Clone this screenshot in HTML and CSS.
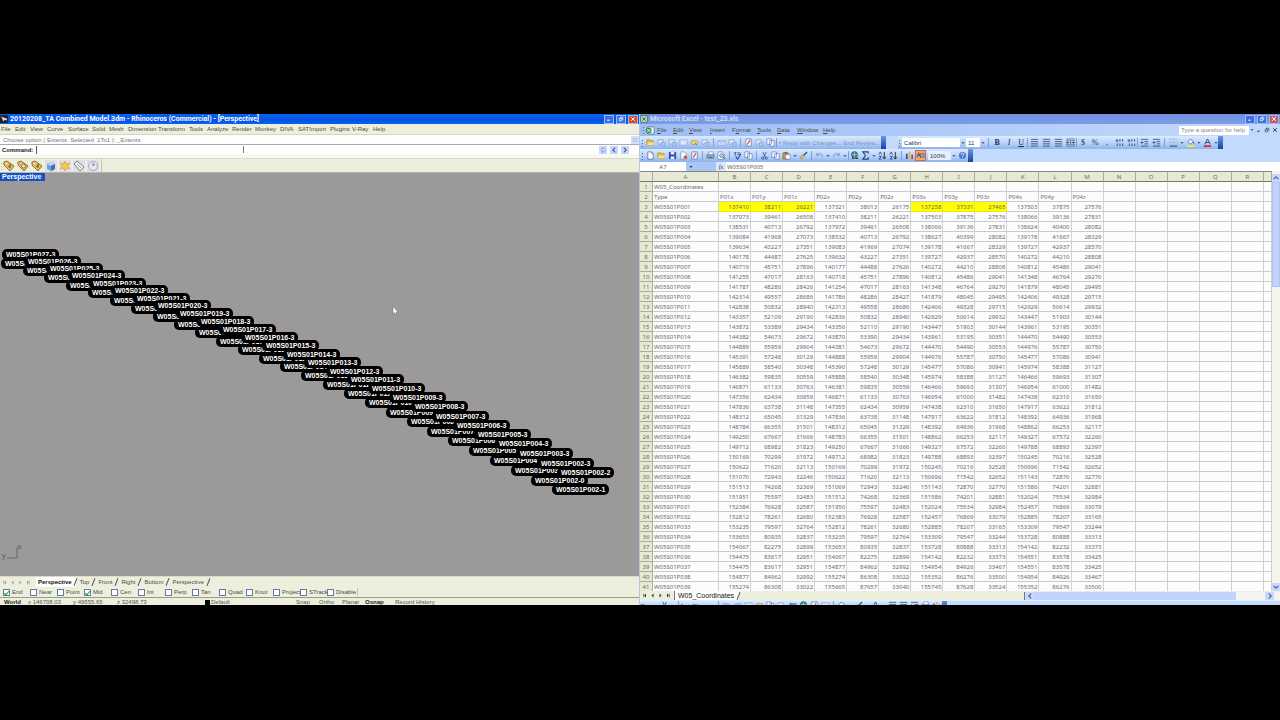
FILE: index.html
```html
<!DOCTYPE html>
<html lang="en">
<head>
<meta charset="utf-8">
<title>Rhinoceros and Excel</title>
<link rel="stylesheet" href="styles.css">
</head>
<body>
<svg class="defs" aria-hidden="true">
  <symbol id="i-open" viewBox="0 0 10 10"><path d="M1 2h3l1 1h3v5H1z" fill="#e8bf3a" stroke="#9a7a20" stroke-width=".6"/><path d="M2 5h7L8 8H1z" fill="#fbe27a"/></symbol>
  <symbol id="i-new" viewBox="0 0 10 10"><path d="M2 1h4l2 2v6H2z" fill="#fff" stroke="#52658f" stroke-width=".8"/><path d="M6 1v2h2" fill="none" stroke="#52658f" stroke-width=".6"/></symbol>
  <symbol id="i-save" viewBox="0 0 10 10"><path d="M1 1h8v8H1z" fill="#344fa6"/><path d="M3 1h4v3H3zM3 6h4v3H3z" fill="#e8eefc"/></symbol>
  <symbol id="i-perm" viewBox="0 0 10 10"><path d="M2 1h4l2 2v6H2z" fill="#fff" stroke="#71809f" stroke-width=".7"/><circle cx="7" cy="7" r="2" fill="#d05a35"/></symbol>
  <symbol id="i-print" viewBox="0 0 10 10"><path d="M3 1h5v4H3z" fill="#fff" stroke="#60708f" stroke-width=".6"/><path d="M1 4h8v4H1z" fill="#93a9c3" stroke="#48617e" stroke-width=".6"/><path d="M3 7h4" stroke="#2c7a38"/></symbol>
  <symbol id="i-preview" viewBox="0 0 10 10"><path d="M1 1h5l2 2v6H1z" fill="#fff" stroke="#61749d" stroke-width=".7"/><circle cx="5" cy="5" r="2" fill="#bfe0f5" stroke="#345" stroke-width=".7"/><path d="M6.500 6.500L9 9" stroke="#345"/></symbol>
  <symbol id="i-spell" viewBox="0 0 10 10"><path d="M1 2h3M2.500 2v3M5 2h3M5 4h3" stroke="#2b4ea0"/><path d="M3 6l2 3 4-6" fill="none" stroke="#2551b0" stroke-width="1.300"/></symbol>
  <symbol id="i-cut" viewBox="0 0 10 10"><path d="M3 1l3 6M7 1L4 7" stroke="#3a57a5"/><circle cx="3" cy="8" r="1.300" fill="none" stroke="#3a57a5"/><circle cx="7" cy="8" r="1.300" fill="none" stroke="#3a57a5"/></symbol>
  <symbol id="i-copy" viewBox="0 0 10 10"><path d="M1 1h5v6H1zM4 3h5v6H4z" fill="#fff" stroke="#5370b5" stroke-width=".7"/></symbol>
  <symbol id="i-paste" viewBox="0 0 10 10"><path d="M1 2h6v7H1z" fill="#d99837" stroke="#815613" stroke-width=".6"/><path d="M3 1h2v2H3z" fill="#555"/><path d="M4 4h5v5H4z" fill="#fff" stroke="#5370b5" stroke-width=".6"/></symbol>
  <symbol id="i-brush" viewBox="0 0 10 10"><path d="M9 1L5 5" stroke="#35518d" stroke-width="1.500"/><path d="M4 4l2 2-3 3-2-1z" fill="#edbd3f" stroke="#8a691a" stroke-width=".5"/></symbol>
  <symbol id="i-undo" viewBox="0 0 10 10"><path d="M2 2v3h3M2 5c2-3 7-3 6 2" fill="none" stroke="#8ba5d5" stroke-width="1.200"/></symbol>
  <symbol id="i-redo" viewBox="0 0 10 10"><path d="M8 2v3H5M8 5C6 2 1 2 2 7" fill="none" stroke="#8ba5d5" stroke-width="1.200"/></symbol>
  <symbol id="i-link" viewBox="0 0 10 10"><circle cx="5" cy="4" r="3.300" fill="#388e5c" stroke="#28598a"/><path d="M2 4h6M5 1v6" stroke="#b8e0d5" stroke-width=".7"/><path d="M2 8h3M6 8h3" stroke="#345" stroke-width="1.500"/></symbol>
  <symbol id="i-sum" viewBox="0 0 10 10"><path d="M8 3V1H2l3 4-3 4h6V7" fill="none" stroke="#263f7d" stroke-width="1.200"/></symbol>
  <symbol id="i-sort" viewBox="0 0 10 10"><path d="M1 4l1.500-3L4 4M1 6h3L1 9h3" fill="none" stroke="#304fa0"/><path d="M7 1v7M5.500 6.500L7 9l1.500-2.500" fill="none" stroke="#222"/></symbol>
  <symbol id="i-chart" viewBox="0 0 10 10"><path d="M1 3h2v6H1z" fill="#315ab5"/><path d="M4 1h2v8H4z" fill="#e6b933"/><path d="M7 4h2v5H7z" fill="#c34336"/></symbol>
  <symbol id="i-draw" viewBox="0 0 10 10"><path d="M1 7l2-5 2 5M2 5h2" fill="none" stroke="#304fa0"/><path d="M5 3h4v4H5z" fill="#8dacda" stroke="#345" stroke-width=".6"/></symbol>
  <symbol id="i-help" viewBox="0 0 10 10"><circle cx="5" cy="5" r="4" fill="#4777d2"/><path d="M3.500 4c0-2 3-2 3 0 0 1-1.500 1-1.500 2M5 7v1" fill="none" stroke="#fff"/></symbol>
  <symbol id="i-note" viewBox="0 0 10 10"><path d="M1 2h6v4H4L2 8V6H1z" fill="#dce7fa" stroke="#89a2cf" stroke-width=".8"/><path d="M5 5h4v4H5z" fill="#b4c7ea" stroke="#7c95c7" stroke-width=".6"/></symbol>
  <symbol id="i-box" viewBox="0 0 10 10"><path d="M1 2h8v6H1z" fill="#d9e5fa" stroke="#91a9d4" stroke-width=".8"/></symbol>
  <symbol id="i-ink" viewBox="0 0 10 10"><ellipse cx="5" cy="5" rx="4" ry="2.500" fill="#ecd482" stroke="#9d8a4a" stroke-width=".7"/><path d="M5 5l3 3" stroke="#777"/></symbol>
  <symbol id="i-mail" viewBox="0 0 10 10"><path d="M1 3h8v5H1zM1 3l4 3 4-3" fill="#dce7fa" stroke="#8ba5d5" stroke-width=".7"/></symbol>
  <symbol id="i-edit" viewBox="0 0 10 10"><path d="M2 1h6v8H2z" fill="#fff" stroke="#5370b5" stroke-width=".8"/><path d="M3 7l3-5 1 1-3 5z" fill="#d65a45"/></symbol>
  <symbol id="i-lines" viewBox="0 0 10 10"><path d="M1 1.500h8M1 4h8M1 6.500h8M1 9h8" stroke="#34496f" stroke-width=".9"/></symbol>
  <symbol id="i-merge" viewBox="0 0 10 10"><path d="M1 1h8v8H1zM1 3h8M1 7h8" fill="none" stroke="#53698f" stroke-width=".8"/><path d="M1 5h2M7 5h2M5 4v2" stroke="#222"/></symbol>
  <symbol id="i-dec" viewBox="0 0 10 10"><path d="M1 3h3M3 1L1 3l2 2" fill="none" stroke="#365cab"/><path d="M5 1h1v3H5zM8 1h1v3H8zM2 6h1v3H2zM5 6h1v3H5zM8 6h1v3H8z" fill="#34496f"/></symbol>
  <symbol id="i-indent" viewBox="0 0 10 10"><path d="M1 1.500h8M5 4h4M5 6.500h4M1 9h8M4 5H1M2.500 3.500L1 5l1.500 1.500" fill="none" stroke="#34496f" stroke-width=".9"/></symbol>
  <symbol id="i-border" viewBox="0 0 10 10"><path d="M1 1h8v8M1 1v8M5 1v8M1 5h8" fill="none" stroke="#8098c5" stroke-width=".7" stroke-dasharray="1 1"/><path d="M1 9h8" stroke="#333"/></symbol>
  <symbol id="i-fill" viewBox="0 0 10 10"><path d="M2 4l3-3 3 3-3 3z" fill="#eef3fd" stroke="#445a86" stroke-width=".8"/><path d="M8 4l1 3" stroke="#346bc4"/><path d="M1 8h8v2H1z" fill="#f6ec33"/></symbol>
  <symbol id="i-color" viewBox="0 0 10 10"><path d="M2 7l3-6 3 6M3 5h4" fill="none" stroke="#344f88" stroke-width="1.100"/><path d="M1 8h8v2H1z" fill="#e32929"/></symbol>
  <symbol id="i-min" viewBox="0 0 10 10"><path d="M2 7h4" stroke="currentColor" stroke-width="1.800"/></symbol>
  <symbol id="i-restore" viewBox="0 0 10 10"><path d="M4 4V2h4v4H7M2 4h4v4H2z" fill="none" stroke="currentColor" stroke-width="1.200"/></symbol>
  <symbol id="i-close" viewBox="0 0 10 10"><path d="M2 2l6 6M8 2L2 8" stroke="currentColor" stroke-width="1.600"/></symbol>
  <symbol id="i-down" viewBox="0 0 10 10"><path d="M1 3h8L5 7z" fill="currentColor"/></symbol>
  <symbol id="i-left" viewBox="0 0 10 10"><path d="M7 1L3 5l4 4" fill="none" stroke="currentColor" stroke-width="2"/></symbol>
  <symbol id="i-right" viewBox="0 0 10 10"><path d="M3 1l4 4-4 4" fill="none" stroke="currentColor" stroke-width="2"/></symbol>
  <symbol id="i-up" viewBox="0 0 10 10"><path d="M1 7l4-4 4 4" fill="none" stroke="currentColor" stroke-width="2"/></symbol>
  <symbol id="i-dn" viewBox="0 0 10 10"><path d="M1 3l4 4 4-4" fill="none" stroke="currentColor" stroke-width="2"/></symbol>
  <symbol id="i-prev" viewBox="0 0 10 10"><path d="M7 1v8L3 5z" fill="currentColor"/></symbol>
  <symbol id="i-next" viewBox="0 0 10 10"><path d="M3 1v8l4-4z" fill="currentColor"/></symbol>
  <symbol id="i-first" viewBox="0 0 10 10"><path d="M8 1v8L4 5zM2 1h1v8H2z" fill="currentColor"/></symbol>
  <symbol id="i-last" viewBox="0 0 10 10"><path d="M2 1v8l4-4zM7 1h1v8H7z" fill="currentColor"/></symbol>
  <symbol id="i-tag" viewBox="0 0 12 12"><path d="M1 5V2l3-1 7 5-4 5z" fill="#e2bd66" stroke="#86642a" stroke-width=".9"/><circle cx="3.500" cy="3.500" r=".8" fill="#fff"/><path d="M5 7l3-2M7 4v4" stroke="#6d501f" stroke-width=".9"/></symbol>
  <symbol id="i-tag2" viewBox="0 0 12 12"><path d="M1 5V2l3-1 7 5-4 5z" fill="#e2bd66" stroke="#86642a" stroke-width=".9"/><circle cx="6.500" cy="6" r="2" fill="#f5e3b2" stroke="#86642a" stroke-width=".8"/></symbol>
  <symbol id="i-cube" viewBox="0 0 12 12"><path d="M2 4l4-2 4 2v5l-4 2-4-2z" fill="#6f9fe0"/><path d="M2 4l4-2 4 2-4 2z" fill="#b9d7f7"/><path d="M6 6l4-2v5l-4 2z" fill="#406fba"/></symbol>
  <symbol id="i-star" viewBox="0 0 12 12"><path d="M6 1l1.500 3L11 3 9 6l2 3-3.500-1L6 11 4.500 8 1 9l2-3-2-3 3.500 1z" fill="#f4c64f" stroke="#d99e32" stroke-width=".6"/></symbol>
  <symbol id="i-tag3" viewBox="0 0 12 12"><path d="M1 4l3-3 7 6-4 4z" fill="#eeeeec" stroke="#77776e" stroke-width=".9"/><path d="M4 4l4 4" stroke="#aaa"/></symbol>
  <symbol id="i-clock" viewBox="0 0 12 12"><circle cx="6" cy="6" r="4.500" fill="#e6e5f1" stroke="#aaa4bc"/><path d="M6 3v3l2-2" fill="none" stroke="#817c99"/></symbol>
</svg>
<main class="desktop">
  <section class="rhino" aria-label="Rhinoceros">
    <header class="title">
      <svg class="app" viewBox="0 0 10 10"><path d="M0 0h10v10H0z" fill="#222"/><path d="M1 2l3 1 4 1 1 3-3-1-2 2-1-3z" fill="#ddd"/></svg>
      <h1>20120208_TA Combined Model.3dm - Rhinoceros (Commercial) - [Perspective]</h1>
      <div class="winbtns"><button aria-label="Minimize"><svg><use href="#i-min"/></svg></button><button aria-label="Restore"><svg><use href="#i-restore"/></svg></button><button class="x" aria-label="Close"><svg><use href="#i-close"/></svg></button></div>
    </header>
    <nav class="menu rmenu" id="rmenu"></nav>
    <div class="history"><span>Choose option ( Extents&nbsp; Selected&nbsp; 1To1 ): _Extents</span><button aria-label="History"><svg viewBox="0 0 10 10"><path d="M1 3h8M1 7h8" stroke="#7f9ad8"/></svg></button></div>
    <div class="command"><label for="cmd">Command:</label><input id="cmd" type="text"><i class="split"></i><span class="grow"></span><button aria-label="Scroll"><svg viewBox="0 0 10 10"><path d="M2 4l3-3 3 3M2 6l3 3 3-3" fill="none" stroke="#3d5fae"/></svg></button><button aria-label="Left"><svg><use href="#i-left"/></svg></button><button aria-label="Right"><svg><use href="#i-right"/></svg></button></div>
    <div class="rtools"><i class="grip pale-grip"></i><span class="rbuttons" id="rtools"></span></div>
    <div class="viewport">
      <div class="vname">Perspective</div>
      <div id="tags"></div>
      <svg class="axes" viewBox="0 0 24 18"><path d="M7 14h10V3" fill="none" stroke="#666"/><path d="M18 1l3 4M21 1l-3 4M2 10l2 3 2-3M4 13l-1 3" fill="none" stroke="#555" stroke-width=".8"/></svg>
      <svg class="cursor" viewBox="0 0 6 10"><path d="M1 0v8l1.500-1.500L4 9l1-.5-1-2h2z" fill="#fff" stroke="#555" stroke-width=".4"/></svg>
    </div>
    <nav class="vtabs"><span class="nav"><button aria-label="First"><svg><use href="#i-first"/></svg></button><button aria-label="Previous"><svg><use href="#i-prev"/></svg></button><button aria-label="Next"><svg><use href="#i-next"/></svg></button><button aria-label="Last"><svg><use href="#i-last"/></svg></button></span><button class="on">Perspective</button><button>Top</button><button>Front</button><button>Right</button><button>Bottom</button><button>Perspective</button></nav>
    <div class="osnap" id="osnap"></div>
    <footer class="status"><b>World</b><span>x 146708.03</span><span>y 49555.65</span><span>z 32498.73</span><i></i><span>Default</span><span>Snap</span><span>Ortho</span><span>Planar</span><b>Osnap</b><span>Record History</span></footer>
  </section>

  <section class="excel" aria-label="Microsoft Excel">
    <header class="title pale">
      <svg class="app" viewBox="0 0 10 10"><path d="M1 1h8v8H1z" fill="#e8f4e8" stroke="#286b36"/><path d="M3 3l4 4M7 3L3 7" stroke="#238238" stroke-width="1.600"/></svg>
      <h2>Microsoft Excel - test_23.xls</h2>
      <div class="winbtns"><button aria-label="Minimize"><svg><use href="#i-min"/></svg></button><button aria-label="Restore"><svg><use href="#i-restore"/></svg></button><button class="x" aria-label="Close"><svg><use href="#i-close"/></svg></button></div>
    </header>
    <div class="xmenu">
      <i class="grip"></i><svg class="book" viewBox="0 0 10 10"><path d="M2 1h7v8H2z" fill="#fff" stroke="#5d75a8"/><path d="M0 2h6v6H0z" fill="#34904a"/><path d="M1 3l4 4M5 3L1 7" stroke="#fff"/></svg>
      <nav class="menu emenu" id="emenu"></nav>
      <input type="text" placeholder="Type a question for help" aria-label="Type a question for help">
      <button class="drop" aria-label="Questions"><svg><use href="#i-down"/></svg></button>
      <div class="docbtns"><button aria-label="Minimize workbook"><svg><use href="#i-min"/></svg></button><button aria-label="Restore workbook"><svg><use href="#i-restore"/></svg></button><button aria-label="Close workbook"><svg><use href="#i-close"/></svg></button></div>
    </div>
    <div class="bars">
      <div class="barrow">
        <div class="bar"><i class="grip"></i><span class="icons" data-icons="open note note box ink note | mail note | edit note copy /"></span><button class="txt"><svg><use href="#i-down"/></svg>Reply with Changes...</button><button class="txt">End Review...</button><i class="cap"></i></div>
        <div class="bar format"><i class="grip"></i><select class="font" aria-label="Font"><option>Calibri</option></select><svg class="sarrow"><use href="#i-down"/></svg><select class="size" aria-label="Font size"><option>11</option></select><svg class="sarrow"><use href="#i-down"/></svg><i class="sep"></i><button class="glyph"><b>B</b></button><button class="glyph"><em>I</em></button><button class="glyph"><u>U</u></button><span class="icons wide" data-icons="/ lines lines lines merge /"></span><button class="glyph">$</button><button class="glyph">%</button><button class="glyph">,</button><span class="icons wide" data-icons="dec dec / indent indent | border v fill v color v"></span><i class="cap"></i></div>
      </div>
      <div class="barrow">
        <div class="bar"><i class="grip"></i><span class="icons" data-icons="new open save perm edit | print preview | spell copy | cut copy paste v brush | undo v redo v / link sum v sort sort | chart draw*"></span><input class="zoom" type="text" value="100%" aria-label="Zoom"><svg class="sarrow"><use href="#i-down"/></svg><span class="icons" data-icons="help"></span><i class="cap"></i></div>
      </div>
    </div>
    <div class="formula"><input class="cellname" type="text" value="A7" aria-label="Name box"><span class="fxgap"><svg><use href="#i-down"/></svg></span><button class="fx"><em>fx</em></button><input class="cellvalue" type="text" value="W05S01P005" aria-label="Formula"></div>
    <div class="sheet">
      <div class="gridwrap"><table><colgroup id="cols"></colgroup><thead id="head"></thead><tbody id="body"></tbody></table></div>
      <div class="vscroll"><button aria-label="Scroll up"><svg><use href="#i-up"/></svg></button><i></i><span></span><button aria-label="Scroll down"><svg><use href="#i-dn"/></svg></button></div>
    </div>
    <div class="sheettabs"><span class="nav"><button aria-label="First sheet"><svg><use href="#i-first"/></svg></button><button aria-label="Previous sheet"><svg><use href="#i-prev"/></svg></button><button aria-label="Next sheet"><svg><use href="#i-next"/></svg></button><button aria-label="Last sheet"><svg><use href="#i-last"/></svg></button></span><button class="on">W05_Coordinates</button><span class="grow"></span><div class="hscroll"><button aria-label="Scroll left"><svg><use href="#i-left"/></svg></button><i></i><span></span><button aria-label="Scroll right"><svg><use href="#i-right"/></svg></button></div></div>
    <div class="drawbar"><div class="bar"><button class="txt">Draw ▾</button><span class="icons" data-icons="cut v |"></span><button class="txt">AutoShapes ▾</button><span class="icons" data-icons="| undo redo box ink copy note draw link edit box | fill v brush v color v lines lines indent print chart"></span><i class="cap"></i></div></div>
  </section>
</main>
<script src="app.js"></script>
</body>
</html>
```

FILE: styles.css
```css
* { box-sizing: border-box; }
body { margin: 0; min-height: 100vh; padding: 114px 0; background: #000; font: 6px/8px "Liberation Sans", Arial, sans-serif; color: #4b4b46; }
button, input, select { font: inherit; color: inherit; margin: 0; padding: 0; border: 0; border-radius: 0; background: none; min-width: 0; }
button { display: flex; align-items: center; justify-content: center; white-space: nowrap; }
select { appearance: none; }
svg { display: block; flex: none; width: 6px; height: 6px; }
i { display: block; flex: none; }
.defs { position: absolute; width: 0; height: 0; }
.grow { flex: 1; }
.desktop { display: grid; grid-template-columns: 1fr 1fr; height: 491px; overflow: hidden; }
.rhino, .excel { display: flex; flex-direction: column; min-width: 0; overflow: hidden; background: #ecefdc; white-space: nowrap; }
.rhino { border-right: 1px solid #b7c6e0; }

.title { display: flex; align-items: center; flex: none; height: 10px; padding-right: 1px; background: linear-gradient(#0a62f2, #0054e3 60%, #0960f5); color: #fff; }
.title h1, .title h2 { flex: 1; margin: 0; font: bold 7px/10px Roboto, sans-serif; }
.title .app { width: 8px; height: 8px; margin-right: 2px; }
.pale { background: linear-gradient(#6f8fe0, #7d9ce8); }
.title.pale h2 { color: #d9e3fa; font-weight: 500; }
.winbtns { display: flex; gap: 2px; }
.winbtns button { width: 10px; height: 9px; background: #3b6fe6; border: 1px solid #9db8f3; color: #fff; }
.winbtns .x { background: #dc4c2c; }
.pale .winbtns .x { background: #cf5b68; }

.menu { display: grid; align-items: center; }
.menu a { color: inherit; text-decoration: none; }
.rmenu { flex: none; height: 11px; padding-left: 1px; border-bottom: 1px solid #d4d6c7; grid-template-columns: 14px 15px 17px 21px 24px 17px 19px 30px 31px 18px 25px 23px 25px 18px 32px 22px 21px 20px; }
.history { display: flex; align-items: center; justify-content: space-between; flex: none; height: 10px; padding-left: 3px; background: #fdfdfd; border-bottom: 1px solid #aaa; color: #77777a; }
.history button { width: 8px; height: 8px; background: #d5e0f8; }
.command { display: flex; align-items: center; flex: none; height: 9px; padding: 0 10px 0 2px; background: #fff; color: #222; gap: 3px; }
.command label { font-weight: bold; }
.command input { width: 204px; height: 8px; border-left: 1px solid #555; }
.command .split { width: 1px; height: 7px; background: #777; }
.command button { width: 8px; height: 8px; background: #c9d8fa; color: #3d5fae; }
.rtools { flex: none; display: flex; align-items: center; height: 19px; padding-top: 5px; border-bottom: 1px solid #b5b5ac; background: linear-gradient(#f7f8ef 4px, #bfc1b4 4px, #ecefdc 5px); }
.rbuttons { display: flex; align-items: center; height: 13px; padding-right: 2px; gap: 2px; border-right: 1px solid #c4c6b8; }
.rtools button { width: 12px; height: 12px; }
.rtools button svg { width: 12px; height: 12px; }
.rbuttons button:nth-child(n+4) { background: #dedfe7; }
.rtools .pale-grip { width: 3px; background: radial-gradient(circle, #b9bbad 1px, transparent 1px) 0 0 / 3px 3px repeat-y; }

.viewport { position: relative; flex: 1; overflow: hidden; background: #9b9999; }
.vname { width: 45px; height: 8px; padding-left: 2px; background: #174fc4; color: #fff; font-weight: bold; font-size: 7px; }
.tag { position: absolute; height: 11px; padding: 0 4px; border-radius: 5px; background: #000; color: #fff; font-size: 7px; font-weight: bold; line-height: 11px; }
.axes { position: absolute; left: 0; bottom: 14px; width: 24px; height: 18px; }
.cursor { position: absolute; left: 392px; top: 133px; width: 6px; height: 10px; }

.vtabs { display: flex; flex: none; height: 11px; border-top: 1px solid #d9dbcd; align-items: center; }
.nav { display: flex; color: #999; }
.nav button { width: 8px; height: 8px; }
.nav svg { width: 5px; height: 5px; }
.vtabs .nav { width: 36px; }
.vtabs > button { height: 10px; padding: 0 4px 0 2px; position: relative; }
.vtabs > button + button { padding: 0 5px 0 4px; }
.vtabs > button::after, .sheettabs > button::after { content: ""; position: absolute; right: 0; top: 1px; width: 1px; height: 8px; background: #555; transform: rotate(22deg); }
.on { color: #111; background: #fff; font-weight: bold; }
.osnap { display: grid; grid-template-columns: repeat(13, 27px); flex: none; height: 11px; padding-left: 3px; border-bottom: 1px solid #999b8f; align-items: center; }
.osnap label { display: flex; align-items: center; gap: 2px; }
.osnap label:last-child { width: 31px; border-right: 1px solid #c4c6b8; }
.osnap input { appearance: none; display: grid; place-items: start center; flex: none; width: 7px; height: 7px; background: #fff; border: 1px solid #5e7da4; }
.osnap input:checked::before { content: ""; width: 2px; height: 4px; border: solid #249a35; border-width: 0 1px 1px 0; transform: rotate(40deg); }
.status { display: grid; grid-template-columns: 24px 45px 44px 88px 6px 85px 23px 23px 23px 30px 60px; flex: none; height: 7px; padding-left: 4px; line-height: 9px; overflow: hidden; color: #555; }
.status b { color: #222; }
.status i { width: 5px; height: 5px; margin-top: 2px; background: #000; }

.xmenu { display: flex; align-items: center; flex: none; height: 12px; padding: 0 1px 0 2px; background: linear-gradient(90deg, #9ebdf5, #c2dafc); }
.xmenu .book { width: 9px; height: 9px; margin-right: 2px; }
.emenu { flex: 1; grid-template-columns: 16px 16px 21px 22px 25px 20px 20px 26px 30px; }
.xmenu > input { width: 70px; height: 9px; padding-left: 2px; background: #fff; }
.xmenu > input::placeholder { color: #888; opacity: 1; }
.drop { width: 6px; height: 8px; }
.drop svg, .sarrow { width: 4px; height: 4px; margin: 0 1px; }
.docbtns { display: flex; }
.docbtns button { width: 8px; height: 8px; color: #345; }
.grip { width: 4px; height: 8px; background: radial-gradient(circle, #4668ad 1px, transparent 1px) 0 0 / 3px 3px repeat-y; }
.bars { flex: none; background: #c2dafc; }
.barrow { display: flex; gap: 12px; height: 13px; }
.bar { display: flex; align-items: center; height: 13px; padding-left: 1px; background: linear-gradient(#dceafe, #b4cff8 60%, #8db1ec); color: #24375f; }
.format { padding-left: 0; }
.icons { display: flex; align-items: center; }
.icons button { width: 11px; height: 11px; }
.icons svg { width: 9px; height: 9px; }
.wide button { width: 12px; }
.icons .arr { width: 6px; }
.icons .arr svg { width: 4px; height: 4px; }
.wide .arr { width: 5px; }
.icons .hot { background: #f5a766; outline: 1px solid #bf6f55; outline-offset: -1px; }
.sep { width: 1px; height: 9px; margin: 0 2px; background: #7d9dd5; }
.sep.thin { margin: 0; }
.txt { padding: 0 1px; color: #8094bd; }
.txt svg { width: 4px; height: 4px; margin-right: 1px; }
.cap { width: 5px; height: 13px; background: linear-gradient(#6e98e5, #14409f); }
.font { width: 58px; height: 9px; padding-left: 2px; background: #fff; }
.size { width: 14px; height: 9px; padding-left: 2px; background: #fff; }
.glyph { width: 12px; font: 8px/10px "Liberation Serif", serif; color: #20304f; }
.zoom { width: 23px; height: 9px; margin-left: 2px; padding-left: 2px; background: #e6effd; }

.formula { display: flex; flex: none; height: 9px; background: #fff; color: #666; }
.formula input { font-family: "Noto Sans", sans-serif; }
.cellname { width: 46px; text-align: center; }
.fxgap { display: flex; align-items: center; width: 30px; padding-left: 3px; background: #a9c6f5; color: #111; }
.fxgap svg { width: 4px; height: 4px; }
.fx { width: 10px; background: #dbe7fb; color: #234; font-family: "Liberation Serif", serif; }
.cellvalue { flex: 1; padding-left: 1px; }
.sheet { display: flex; flex: 1; min-height: 0; }
.gridwrap { flex: 1; overflow: hidden; background: #fdfcfd; }
table { width: 100%; table-layout: fixed; border-collapse: separate; border-spacing: 0; font: 6px/8px "Noto Sans", sans-serif; color: #6c6a70; }
th, td { height: 10px; padding: 0 1px; border-right: 1px solid #d4d1d4; border-bottom: 1px solid #ccc9cc; font-weight: normal; text-align: right; line-height: 8px; overflow: hidden; }
th { text-align: center; background: #e6ead5; border-color: #aab098; color: #6b6d5e; }
thead th { height: 11px; border-top: 1px solid #85897a; border-bottom-color: #737f5b; }
.c-row { width: 13px; }
.c-name { width: 66px; }
.c-rest { width: 8px; }
td.text { text-align: left; }
td.mark { background: #ff0; border-color: #eaea1c; }
.vscroll { display: flex; flex-direction: column; width: 8px; padding-top: 3px; background: #f5f5ef; }
.vscroll button { height: 8px; background: #c8d7fb; color: #4864a5; }
.vscroll i { height: 105px; background: #c2d2fb; border: 1px solid #afc3f3; }
.vscroll span { flex: 1; }
.sheettabs { display: flex; flex: none; height: 9px; align-items: center; }
.sheettabs .nav { color: #333; width: 34px; }
.sheettabs > button { position: relative; height: 9px; padding: 0 5px 0 3px; border-left: 1px solid #777; font-weight: normal; font-size: 7px; }
.hscroll { display: flex; width: 40%; height: 8px; padding-right: 6px; background: #f5f5ef; border-left: 1px solid #777; }
.hscroll button { width: 9px; background: #c8d7fb; color: #4864a5; }
.hscroll i { flex: 7; background: #c2d2fb; }
.hscroll span { flex: 1; }
.drawbar { flex: none; height: 5px; overflow: hidden; background: #c2dafc; border-top: 1px solid #e6effc; }
.drawbar .bar { width: 48%; height: 9px; }
.drawbar .cap { margin-left: auto; }
.drawbar .txt { color: #24375f; }
```

FILE: app.js
```js
const $ = id => document.getElementById(id);
const svg = n => `<svg><use href="#i-${n}"/></svg>`;
const links = s => s.split(" ").map(t => `<a href="#">${t}</a>`).join("");

$("rmenu").innerHTML = links("File Edit View Curve Surface Solid Mesh Dimension Transform Tools Analyze Render Monkey DIVA SATImport Plugins V-Ray Help");
$("emenu").innerHTML = "File Edit View Insert Format Tools Data Window Help".split(" ")
  .map(t => `<a href="#">${t === "Format" ? "F<u>o</u>rmat" : `<u>${t[0]}</u>${t.slice(1)}`}</a>`).join("");
$("rtools").innerHTML = "tag tag2 tag cube star tag3 clock".split(" ").map(n => `<button aria-label="${n}">${svg(n)}</button>`).join("");
$("osnap").innerHTML = "End Near Point Mid Cen Int Perp Tan Quad Knot Project STrack Disable".split(" ")
  .map(t => `<label><input type="checkbox"${t === "End" || t === "Mid" ? " checked" : ""}>${t}</label>`).join("");

// Toolbar strips: "|" wide separator, "/" thin separator, "v" drop-down arrow, "*" pressed.
document.querySelectorAll("[data-icons]").forEach(el => {
  el.innerHTML = el.dataset.icons.split(" ").map(n => {
    if (n === "|") return '<i class="sep"></i>';
    if (n === "/") return '<i class="sep thin"></i>';
    if (n === "v") return `<button class="arr" aria-label="More">${svg("down")}</button>`;
    const name = n.replace("*", "");
    return `<button aria-label="${name}"${n !== name ? ' class="hot"' : ""}>${svg(name)}</button>`;
  }).join("");
});

// Point labels: [x, y] of each label's left edge and middle, from point 27 down to 2.
const back = [[1,263],[23,270],[44,277],[66,285],[88,292],[110,300],[131,308],[153,316],[174,324],[195,332],[216,341],[238,349],[259,358],[280,366],[301,375],[323,384],[344,393],[365,402],[386,412],[407,421],[427,431],[448,440],[469,450],[490,460],[511,470],[531,480]];
const front = [[2,254],[24,261],[46,268],[68,275],[89,283],[111,290],[133,298],[154,305],[176,313],[197,321],[219,329],[241,337],[262,345],[283,354],[304,362],[326,371],[347,379],[368,388],[389,397],[411,406],[432,416],[453,425],[474,434],[495,443],[516,453],[537,463]];
const viewTop = 173;
const tag = ([x, y], n, s) => `<span class="tag" style="left:${x}px;top:${y - viewTop - 5}px">W05S01P${String(n).padStart(3, "0")}-${s}</span>`;
$("tags").innerHTML = back.map((p, i) => tag(p, 27 - i, 0)).join("") + tag([552, 489], 2, 1) + tag([557, 472], 2, 2)
  + front.map((p, i) => tag(p, 27 - i, 3)).join("");

const data = `137410 38211 26221 137321 38013 26175 137258 37331 27465 137503 37875 27576
137973 39461 26508 137410 38211 26221 137503 37875 27576 138066 39136 27831
138531 40713 26792 137972 39461 26508 138066 39136 27831 138624 40400 28082
139084 41968 27073 138532 40713 26792 138627 40399 28082 139178 41667 28329
139634 43227 27351 139083 41969 27074 139178 41667 28329 139727 42937 28570
140178 44487 27625 139632 43227 27351 139727 42937 28570 140272 44210 28808
140719 45751 27896 140177 44488 27626 140272 44210 28808 140812 45486 29041
141255 47017 28163 140718 45751 27896 140812 45486 29041 141348 46764 29270
141787 48286 28426 141254 47017 28163 141348 46764 29270 141879 48045 29495
142314 49557 28686 141786 48286 28427 141879 48045 29495 142406 49328 29715
142838 50832 28940 142313 49558 28686 142406 49328 29715 142929 50614 29932
143357 52109 29190 142836 50832 28940 142929 50614 29932 143447 51903 30144
143872 53389 29434 143356 52110 29190 143447 51903 30144 143961 53195 30351
144382 54673 29672 143870 53390 29434 143961 53195 30351 144470 54490 30553
144889 55959 29904 144381 54673 29672 144470 54490 30553 144976 55787 30750
145391 57248 30129 144888 55959 29904 144976 55787 30750 145477 57086 30941
145889 58540 30348 145390 57248 30129 145477 57086 30941 145974 58388 31127
146382 59835 30559 145888 58540 30348 145974 58388 31127 146466 59693 31307
146871 61133 30763 146381 59835 30559 146466 59693 31307 146954 61000 31482
147356 62434 30959 146871 61133 30763 146954 61000 31482 147438 62310 31650
147836 63738 31148 147355 62434 30959 147438 62310 31650 147917 63622 31812
148312 65045 31329 147836 63738 31148 147917 63622 31812 148392 64936 31968
148784 66355 31501 148312 65045 31329 148392 64936 31968 148862 66253 32117
149250 67667 31666 148783 66355 31501 148862 66253 32117 149327 67572 32260
149712 68982 31823 149250 67667 31666 149327 67572 32260 149788 68893 32397
150169 70299 31972 149712 68982 31823 149788 68893 32397 150245 70216 32528
150622 71620 32113 150169 70299 31972 150245 70216 32528 150696 71542 32652
151070 72943 32246 150622 71620 32113 150696 71542 32652 151143 72870 32770
151513 74268 32369 151069 72943 32246 151143 72870 32770 151586 74201 32881
151951 75597 32483 151512 74268 32369 151586 74201 32881 152024 75534 32984
152384 76928 32587 151950 75597 32483 152024 75534 32984 152457 76869 33079
152812 78261 32680 152383 76928 32587 152457 76869 33079 152885 78207 33165
153235 79597 32764 152812 78261 32680 152885 78207 33165 153309 79547 33244
153653 80935 32837 153235 79597 32764 153309 79547 33244 153728 80888 33313
154067 82275 32899 153653 80935 32837 153728 80888 33313 154142 82232 33373
154475 83617 32951 154067 82275 32899 154142 82232 33373 154551 83578 33425
154475 83617 32951 154877 84962 32992 154954 84926 33467 154551 83578 33425
154877 84962 32992 155274 86308 33022 155352 86276 33500 154954 84926 33467
155274 86308 33022 155665 87657 33040 155745 87628 33524 155352 86276 33500`.split("\n").map(r => r.split(" "));
const letters = "ABCDEFGHIJKLMNOPQR".split("");
$("cols").innerHTML = '<col class="c-row"><col class="c-name">' + "<col>".repeat(17) + '<col class="c-rest">';
$("head").innerHTML = "<tr><th></th>" + letters.map(l => `<th>${l}</th>`).join("") + "<th></th></tr>";
const row = (n, cells, cls) => {
  let h = `<tr><th>${n}</th>`;
  for (let i = 0; i < 19; i++) h += `<td class="${cls(i)}">${cells[i] || ""}</td>`;
  return h + "</tr>";
};
const titles = ["Type"];
for (let p = 1; p <= 4; p++) for (const a of "xyz") titles.push(`P0${p}${a}`);
$("body").innerHTML = row(1, ["W05_Coordinates"], () => "text") + row(2, titles, () => "text")
  + data.map((r, k) => row(k + 3, ["W05S01P" + String(k + 1).padStart(3, "0"), ...r],
    i => i === 0 ? "text" : k === 0 && ((i > 0 && i < 4) || (i > 6 && i < 10)) ? "mark" : "")).join("");
```
